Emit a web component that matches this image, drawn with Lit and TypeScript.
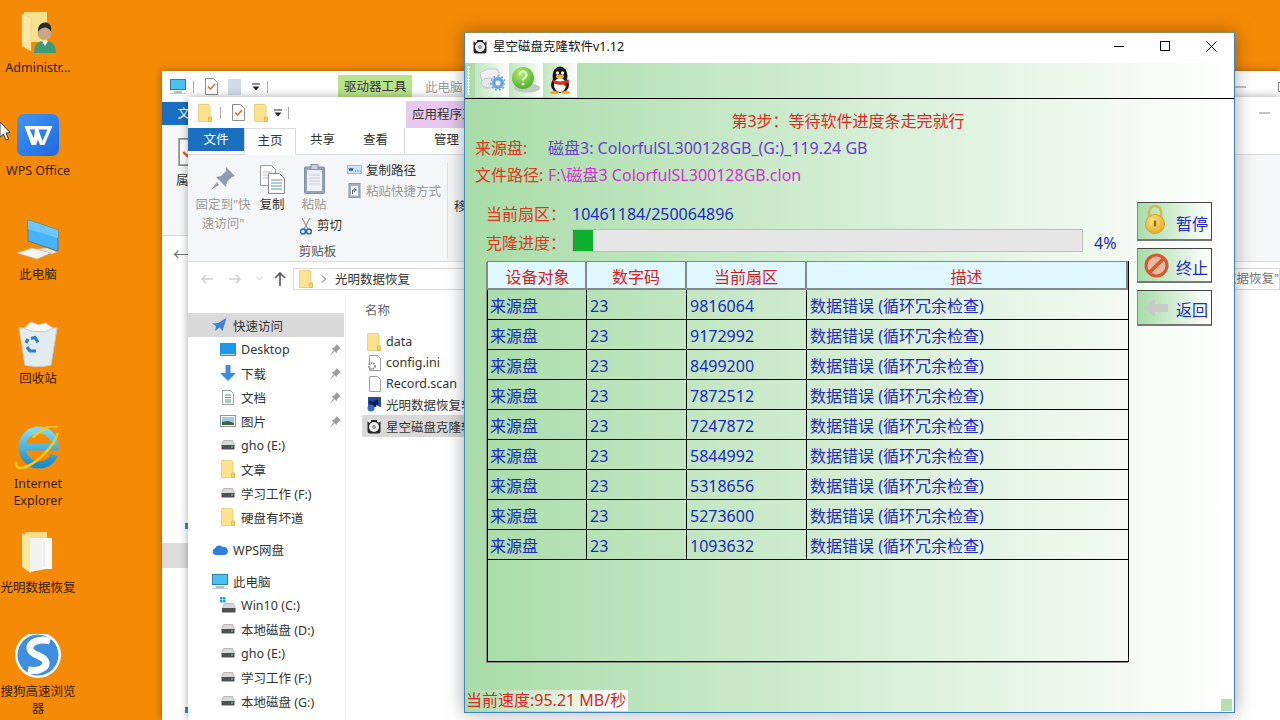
import { LitElement, html, css } from 'lit';
import { customElement } from 'lit/decorators.js';

// ---- small explorer icons ----
const folder = () => html`<svg width="14" height="18" viewBox="0 0 14 18"><path d="M.5.5h10.500l1 1v16H.5z" fill="#fde38f" stroke="#ead07a"/><path d="M10.500 13h3v4.500h-3z" fill="#f5cf68" stroke="#e0bb55"/></svg>`;
const checkDoc = () => html`<svg width="13" height="17" viewBox="0 0 13 17"><path d="M.5.5h8l4 4v12H.5z" fill="#fff" stroke="#8c8c8c"/><path d="M3 8.500l2.500 2.500 4.500-5" fill="none" stroke="#d8602c" stroke-width="1.400"/></svg>`;
const dropdown = () => html`<svg width="8" height="8" viewBox="0 0 8 8"><path d="M0 1h8" stroke="#222"/><path d="M.5 3.500h7L4 7.500z" fill="#222"/></svg>`;
const drive = () => html`<svg width="14" height="10" viewBox="0 0 14 10"><path d="M2.500.5h9l2 5H.5z" fill="#d8d8d8" stroke="#bbb"/><rect x=".5" y="5" width="13" height="4.500" fill="#4c5054"/><rect x="10" y="6.500" width="2" height="1" fill="#8fe08f"/></svg>`;
const winDrive = () => html`<svg width="16" height="16" viewBox="0 0 16 16"><g fill="#19a8c8"><rect x="0" y="0" width="2.500" height="2.500"/><rect x="3" y="0" width="2.500" height="2.500"/><rect x="0" y="3" width="2.500" height="2.500"/><rect x="3" y="3" width="2.500" height="2.500"/></g><path d="M4.500 6.500h9l2 5H2.500z" fill="#d8d8d8" stroke="#bbb"/><rect x="2" y="11" width="13.500" height="4.500" fill="#4c5054"/></svg>`;
const pinSmall = () => html`<svg width="11" height="11" viewBox="0 0 10 10"><path d="M6 0l4 4-1.500.5L6.500 6.500 6 8.500 1.500 4 3.500 3.500 5.500 1.500zM3 6l-3 4 4-3z" fill="#9a9fa6"/></svg>`;
const star = () => html`<svg width="15" height="14" viewBox="0 0 15 14"><path d="M14.500 0L10.500 13 7.500 9.500 3 13 4 8 0 5.500 6 5z" fill="#3b84d8"/></svg>`;
const desktopSmall = () => html`<svg width="16" height="13" viewBox="0 0 16 13"><rect width="16" height="13" fill="#1e96ee"/><rect x="1" y="11" width="14" height="1" fill="#bde0fa"/></svg>`;
const down = () => html`<svg width="16" height="16" viewBox="0 0 16 16"><path d="M5.500 0h5v8H16l-8 8-8-8h5.500z" fill="#3c8ee0"/></svg>`;
const docs = () => html`<svg width="12" height="15" viewBox="0 0 12 15"><path d="M.5.5h8l3 3v11H.5z" fill="#fff" stroke="#9aa0a6"/><path d="M3 5h6M3 7.500h6M3 10h6M3 12h6" stroke="#4aa070"/></svg>`;
const pics = () => html`<svg width="16" height="12" viewBox="0 0 16 12"><rect x=".5" y=".5" width="15" height="11" fill="#fff" stroke="#8d96a0"/><rect x="2" y="2" width="12" height="8" fill="#a8c8e8"/><path d="M2 7l6-1 6 2v2H2z" fill="#3c6040"/></svg>`;
const cloud = () => html`<svg width="16" height="11" viewBox="0 0 16 11"><path d="M4 11a3.500 3.500 0 0 1-1-6.800A5 5 0 0 1 11 3a4 4 0 0 1 1.500 8z" fill="#2f7fdb"/></svg>`;
const pcSmall = () => html`<svg width="16" height="15" viewBox="0 0 16 15"><rect x=".5" y=".5" width="15" height="10" fill="#4cc0f0" stroke="#2a7fb8"/><path d="M4 13h8" stroke="#8ab" stroke-width="1.500"/><path d="M0 14.500h16" stroke="#bcd"/></svg>`;
const gearDoc = () => html`<svg width="14" height="16" viewBox="0 0 14 16"><path d="M2.500.5h8l3 3v12h-11z" fill="#fff" stroke="#a0a0a0"/><circle cx="5" cy="11" r="3" fill="#fff" stroke="#8d8d8d" stroke-width="2" stroke-dasharray="1.500 1"/></svg>`;
const blankDoc = () => html`<svg width="14" height="16" viewBox="0 0 14 16"><path d="M2.500.5h8l3 3v12h-11z" fill="#fff" stroke="#a0a0a0"/></svg>`;
const appBlue = () => html`<svg width="14" height="15" viewBox="0 0 14 15"><rect x="1" y="0" width="13" height="10" fill="#2b4a9c"/><path d="M2 3l4 2 5-3v6l-5 3-3-1z" fill="#101a50"/><circle cx="4" cy="11" r="3.500" fill="#3868c8"/><path d="M9 8l4 2-3 2z" fill="#fff"/></svg>`;
const diskClock = () => html`<svg width="14" height="15" viewBox="0 0 14 15"><rect x=".5" y="1" width="13" height="13.500" rx="2.500" fill="#262626"/><circle cx="7" cy="8" r="5" fill="#f0f0f0"/><circle cx="7" cy="8" r="1.500" fill="#bbb" stroke="#555" stroke-width=".6"/><circle cx="2.500" cy="2" r="1.500" fill="#fff"/><circle cx="11.500" cy="2" r="1.500" fill="#fff"/></svg>`;

// ---- ribbon icons ----
const bigPin = () => html`<svg width="24" height="24" viewBox="0 0 24 24"><path d="M15 0l9 9-3 1-5 5-1 5-10-10 5-1 5-5zM6 15l-6 8 8-5z" fill="#8f9cb4"/></svg>`;
const copyIcon = () => html`<svg width="25" height="29" viewBox="0 0 25 29"><path d="M.5.5h11l4 4v16H.5z" fill="#fff" stroke="#9a9a9a"/><path d="M3 7h9M3 10h9M3 13h9" stroke="#b8b8b8"/><path d="M8.500 8.500h11l5 5v15h-16z" fill="#fff" stroke="#8a8a8a"/><path d="M11 15h11M11 18h11M11 21h11M11 24h11" stroke="#5f96c8"/></svg>`;
const pasteIcon = () => html`<svg width="21" height="30" viewBox="0 0 21 30"><rect x=".5" y="3" width="20" height="26.500" rx="1" fill="#95a3b8" stroke="#808da2"/><rect x="3" y="6" width="15" height="21" fill="#eef1f6"/><path d="M5 11h11M5 14h11M5 17h11M5 20h11" stroke="#c2cbd8"/><rect x="7" y=".5" width="7" height="5" fill="#c8cfda" stroke="#8a96a8"/></svg>`;
const pathIcon = () => html`<svg width="15" height="9" viewBox="0 0 15 9"><rect x=".5" y=".5" width="14" height="8" fill="#cfe2f7" stroke="#9cbde0"/><path d="M2 3l1 3 1-3 1 3 1-3M8 6h1M10.500 6h1M13 6h.500" fill="none" stroke="#2a5a92"/></svg>`;
const shortcutIcon = () => html`<svg width="12" height="16" viewBox="0 0 12 16"><rect x=".5" y="1.500" width="11" height="14" fill="#a6b2c4" stroke="#8a96a8"/><rect x="2.500" y="4" width="7" height="9.500" fill="#f3f5f8"/><path d="M4 12V8h3M5.500 6.500L8 8 5.500 9.500" fill="none" stroke="#5a6a80"/></svg>`;
const scissors = () => html`<svg width="12" height="17" viewBox="0 0 12 17"><path d="M2 0l6 11M10 0L4 11" stroke="#9a9a9a" stroke-width="1.300"/><circle cx="3" cy="13.500" r="2.500" fill="none" stroke="#2068c0" stroke-width="1.500"/><circle cx="9" cy="13.500" r="2.500" fill="none" stroke="#2068c0" stroke-width="1.500"/></svg>`;
const navArrow = (d: string, c: string) => html`<svg width="14" height="12" viewBox="0 0 14 12"><path d=${d} fill="none" stroke=${c} stroke-width="1.500"/></svg>`;

// ---- clone tool icons ----
const toolDisk = () => html`<svg width="26" height="24" viewBox="0 0 26 24"><path d="M1 5l7-4h10l2 3v9H3z" fill="#f2f2f6" stroke="#c5c8d4"/><ellipse cx="10" cy="15" rx="8" ry="5" fill="#e4e6ee" stroke="#c0c4d0"/><circle cx="19" cy="15" r="6" fill="#6da4dc"/><circle cx="19" cy="15" r="2.500" fill="#e8f2fb"/><circle cx="19" cy="15" r="7" fill="none" stroke="#6da4dc" stroke-width="1.500" stroke-dasharray="2 2"/></svg>`;
const toolHelp = () => html`<svg width="30" height="28" viewBox="0 0 30 28"><defs><radialGradient id="hg" cx=".4" cy=".3" r=".8"><stop offset="0" stop-color="#b8ec70"/><stop offset="1" stop-color="#3ea828"/></radialGradient></defs><ellipse cx="16" cy="22" rx="13" ry="4.500" fill="#c2c8c2"/><circle cx="12" cy="12" r="11" fill="url(#hg)"/><path d="M8.500 8.500a3.500 3.500 0 1 1 5 3.500c-1 .7-1.500 1.200-1.500 2.500" fill="none" stroke="#e8f8d8" stroke-width="2"/><circle cx="12" cy="18" r="1.300" fill="#e8f8d8"/></svg>`;
const toolQQ = () => html`<svg width="24" height="28" viewBox="0 0 24 28"><ellipse cx="12" cy="10" rx="7.500" ry="9.500" fill="#141414"/><ellipse cx="12" cy="19" rx="9" ry="8" fill="#141414"/><ellipse cx="12" cy="19" rx="6" ry="7" fill="#fff"/><circle cx="9.500" cy="7" r="1.700" fill="#fff"/><circle cx="14.500" cy="7" r="1.700" fill="#fff"/><ellipse cx="12" cy="10.500" rx="4" ry="2" fill="#f5b818"/><path d="M3.500 13.500c5 2.500 12 2.500 17 0l.5 2.500c-1 1-2 1.500-3 1.800l1 4-4-3.300c-2.500.4-5 .3-8-.5z" fill="#e02818"/><ellipse cx="6.500" cy="26.500" rx="4.500" ry="1.500" fill="#f5a818"/><ellipse cx="17.500" cy="26.500" rx="4.500" ry="1.500" fill="#f5a818"/></svg>`;
const lock = () => html`<svg width="22" height="32" viewBox="0 0 22 32"><defs><radialGradient id="lg" cx=".4" cy=".35" r=".8"><stop offset="0" stop-color="#ffe680"/><stop offset="1" stop-color="#e09a18"/></radialGradient></defs><path d="M5 13V7a6 6 0 0 1 12 0v6" fill="none" stroke="#d8b850" stroke-width="2.500"/><circle cx="11" cy="19" r="9.500" fill="url(#lg)" stroke="#d8a030"/><path d="M11 15.500v6" stroke="#9a6a10" stroke-width="2.500"/></svg>`;
const stopSign = () => html`<svg width="25" height="25" viewBox="0 0 25 25"><circle cx="12.500" cy="12.500" r="10.500" fill="#e8b8a0" stroke="#d45a30" stroke-width="3"/><path d="M5 20L20 5" stroke="#d45a30" stroke-width="3.500"/></svg>`;
const backArrow = () => html`<svg width="24" height="18" viewBox="0 0 24 18"><path d="M0 9l11-9v5h13v8H11v5z" fill="#c6cbc6"/></svg>`;

// ---- desktop icons, drawn on a 76x48 tile ----
const shortcut = (x: number, y: number) => html`<g transform="translate(${x} ${y})"><rect width="12" height="12" fill="#fff" stroke="#ccc" stroke-width=".5"/><path d="M3 10V6h3M5 3.500L8.500 5.800 5 8z" fill="#2a6ab8" stroke="#2a6ab8"/></g>`;
const adminIcon = () => html`<svg width="76" height="48" viewBox="0 0 76 48"><path d="M24 2h23v30H24z" fill="#f7e08e"/><path d="M22 4l9 4v33l-9-5z" fill="#fbe9a8" stroke="#e6c870" stroke-width=".5"/><path d="M34 43c0-9 4-12 11-12s11 3 11 12z" fill="#3f9a78"/><path d="M42 31l3 5 3-5z" fill="#fff"/><circle cx="44.500" cy="23" r="7" fill="#c8a488"/><path d="M38 22c-.5-7 4-10 8-9.500s6 4 5 9c-2-3-4-4-6-4s-5 1-7 4.500z" fill="#2a2a2a"/></svg>`;
const wpsIcon = () => html`<svg width="76" height="48" viewBox="0 0 76 48"><defs><linearGradient id="wg" x1="0" y1="0" x2="1" y2="1"><stop offset="0" stop-color="#4096f4"/><stop offset="1" stop-color="#2068e0"/></linearGradient></defs><rect x="17" y="1" width="42" height="42" rx="7" fill="url(#wg)"/><path d="M24.500 13H52.500L44.500 32H40L38 26.500 36 32H31.500z" fill="#fff"/><path d="M29.500 16.500H35L33.800 25zM38.500 16.500H47.500L42.500 28 40 21z" fill="#2f80ec"/>${shortcut(15, 33)}</svg>`;
const pcIcon = () => html`<svg width="76" height="48" viewBox="0 0 76 48"><path d="M28 3l30 10v21L28 24z" fill="#45b4f8" stroke="#5a7a90"/><path d="M28 3l30 10v8L28 12z" fill="#6cc8fb"/><path d="M36 32l16 5 5-2-10-4z" fill="#e0e0e0"/><path d="M17 36l15-5 19 5-14 6z" fill="#f4f4f4" stroke="#bbb" stroke-width=".5"/></svg>`;
const binIcon = () => html`<svg width="76" height="48" viewBox="0 0 76 48"><path d="M19 7l38 0-6 37c-8 2-18 2-26 0z" fill="#e4ebef" stroke="#c4d0d6"/><path d="M24 7l7-6 8 3 6-2 8 5-8 4-14-1z" fill="#f8f8f8" stroke="#ccc"/><path d="M31 17.500l4-1 3 5M36 30h-6l-3-4M26 22l2-4" fill="none" stroke="#2480d4" stroke-width="3.200"/></svg>`;
const ieIcon = () => html`<svg width="76" height="48" viewBox="0 0 76 48"><defs><linearGradient id="ig" x1="0" y1="0" x2="0" y2="1"><stop offset="0" stop-color="#7ed8f4"/><stop offset="1" stop-color="#1c8cc8"/></linearGradient></defs><path d="M24 21h31c.2-10-7-17-16-17-9.500 0-17 7.500-17 17s7.500 18 17 18c7 0 13-4 15-10" fill="none" stroke="url(#ig)" stroke-width="7"/><path d="M25 20h29" stroke="url(#ig)" stroke-width="6"/><ellipse cx="37" cy="21" rx="28" ry="10" transform="rotate(-45 37 21)" fill="none" stroke="#f5c820" stroke-width="2.500" stroke-dasharray="62 30" stroke-dashoffset="-6"/></svg>`;
const pagesIcon = () => html`<svg width="76" height="48" viewBox="0 0 76 48"><path d="M25 2h22v36H25z" fill="#f7de8c"/><path d="M22 3l9 5v35l-9-6z" fill="#fbe7a4"/><path d="M30 8h13l3 3v28l-16 3z" fill="#f2f2f0"/><path d="M42 8h10v31H42z" fill="#fafafa"/><path d="M44 11v26" stroke="#ddd"/></svg>`;
const sogouIcon = () => html`<svg width="76" height="48" viewBox="0 0 76 48"><circle cx="38" cy="21" r="23" fill="#fff"/><circle cx="38" cy="21" r="20.500" fill="#3f8ee0"/><path d="M50 7C40 4 29 8 30 15c1 6 15 7 16 13 1 6-8 10-18 8" fill="none" stroke="#fff" stroke-width="7"/>${shortcut(15, 33)}</svg>`;

const desktopItems = [
  { top: 10, label: 'Administr...', icon: adminIcon },
  { top: 113, label: 'WPS Office', icon: wpsIcon },
  { top: 217, label: '此电脑', icon: pcIcon },
  { top: 321, label: '回收站', icon: binIcon },
  { top: 426, label: 'Internet Explorer', icon: ieIcon },
  { top: 530, label: '光明数据恢复', icon: pagesIcon },
  { top: 634, label: '搜狗高速浏览器', icon: sogouIcon },
];

type NavItem = { label: string; icon: () => unknown; pin?: boolean; top?: boolean; sel?: boolean; gap?: boolean };
const navItems: NavItem[] = [
  { label: '快速访问', icon: star, top: true, sel: true },
  { label: 'Desktop', icon: desktopSmall, pin: true },
  { label: '下载', icon: down, pin: true },
  { label: '文档', icon: docs, pin: true },
  { label: '图片', icon: pics, pin: true },
  { label: 'gho (E:)', icon: drive },
  { label: '文章', icon: folder },
  { label: '学习工作 (F:)', icon: drive },
  { label: '硬盘有坏道', icon: folder },
  { label: 'WPS网盘', icon: cloud, top: true, gap: true },
  { label: '此电脑', icon: pcSmall, top: true, gap: true },
  { label: 'Win10 (C:)', icon: winDrive },
  { label: '本地磁盘 (D:)', icon: drive },
  { label: 'gho (E:)', icon: drive },
  { label: '学习工作 (F:)', icon: drive },
  { label: '本地磁盘 (G:)', icon: drive },
];

const files = [
  { label: 'data', icon: folder },
  { label: 'config.ini', icon: gearDoc },
  { label: 'Record.scan', icon: blankDoc },
  { label: '光明数据恢复软件', icon: appBlue },
  { label: '星空磁盘克隆软件', icon: diskClock, sel: true },
];

const sectors = ['9816064', '9172992', '8499200', '7872512', '7247872', '5844992', '5318656', '5273600', '1093632'];

// View Component: the clone tool window
@customElement('clone-window')
export class CloneWindow extends LitElement {
  static styles = css`
    :host {
      position: absolute;
      left: 464px;
      top: 32px;
      width: 771px;
      height: 681px;
      display: flex;
      flex-direction: column;
      box-sizing: border-box;
      border: 1px solid #3f82b8;
      border-top-color: #9a8a5a;
      background: #fff;
      box-shadow: 0 0 18px rgba(0, 0, 0, 0.35);
      font-family: 'Noto Sans', 'Noto Sans CJK SC', sans-serif;
      font-size: 16px;
      color: #1a2bc0;
    }
    .title {
      height: 30px;
      flex: none;
      box-sizing: border-box;
      display: flex;
      align-items: center;
      padding: 0 0 4px 8px;
      font-size: 12.5px;
      color: #111;
    }
    .title .name { flex: 1; margin: -2px 0 0 6px; }
    .ctl {
      width: 46px;
      height: 26px;
      display: flex;
      align-items: center;
      justify-content: center;
    }
    .panel {
      flex: 1;
      display: flex;
      flex-direction: column;
      background: linear-gradient(90deg, #a8dca8 0%, #ffffff 100%);
    }
    .toolbar {
      height: 36px;
      flex: none;
      box-sizing: border-box;
      display: flex;
      border-bottom: 1px solid #000;
      padding-left: 2px;
    }
    .grip {
      width: 3px;
      margin: 3px 4px 3px 0;
      background-image: radial-gradient(circle, #f4f8f0 1px, transparent 1.2px);
      background-size: 3px 3px;
    }
    .tool {
      width: 34px;
      height: 34px;
      display: flex;
      align-items: center;
      justify-content: center;
      background: linear-gradient(90deg, #bfe5bf, #fdfefd);
    }
    .tools { display: flex; margin-left: 1px; }
    .content { flex: 1; display: flex; flex-direction: column; padding-top: 9px; }
    .step { line-height: 27px; text-align: center; color: #e0281e; padding-right: 3px; }
    .info { line-height: 27px; display: flex; padding-left: 10px; }
    .lbl { color: #d93a20; }
    .info .lbl { width: 73px; flex: none; }
    .purple { color: #6a3fd0; }
    .magenta { color: #d030d0; }
    .lower { display: flex; margin-top: 13px; padding-left: 21px; }
    .left { width: 643px; flex: none; }
    .sector { height: 22px; line-height: 24px; display: flex; }
    .sector .lbl, .progress .lbl { width: 86px; flex: none; }
    .progress { display: flex; height: 23px; margin-top: 5px; line-height: 28px; }
    .bar {
      width: 511px;
      box-sizing: border-box;
      background: #e6e6e6;
      border: 1px solid #bdbdbd;
    }
    .fill { height: 100%; background: #0cb02c; }
    .pct { margin-left: 11px; }
    .table {
      margin: 9px 0 0 1px;
      height: 401px;
      box-sizing: border-box;
      width: 642px;
      border: 1px solid #000;
      border-top: none;
      box-shadow: -1px 1px 0 #8a8a8a;
    }
    .row {
      display: grid;
      grid-template-columns: 99px 100px 120px 1fr;
      grid-template-rows: 29px;
      height: 30px;
      box-sizing: border-box;
      border-bottom: 1px solid #000;
      line-height: 33px;
    }
    .row > div { border-right: 1px solid #000; padding-left: 3px; overflow: hidden; white-space: nowrap; }
    .row > div:first-child { padding-left: 2px; }
    .row > div:last-child { border-right: none; }
    .head {
      height: 29px;
      grid-template-rows: 26px;
      background: #dff7ff;
      color: #d6201e;
      text-align: center;
      border-bottom: 2px solid #7f8a8a;
      border-top: 1px solid #7f8a8a;
      line-height: 30px;
      box-shadow: -1px 0 0 #7f8a8a;
    }
    .head > div { border-right: 2px solid #7f8a8a; padding-left: 0; }
    .head > div:last-child { border-right: 2px solid #7f8a8a; }
    .buttons { margin-left: 8px; display: flex; flex-direction: column; gap: 7px; }
    .btn {
      width: 75px;
      box-sizing: border-box;
      display: flex;
      align-items: center;
      justify-content: space-between;
      padding: 0 3px 0 6px;
      background: linear-gradient(90deg, #a8dca8, #ffffff);
      border-top: 1px solid #444;
      border-right: 1px solid #444;
      border-left: 1px solid #888;
      border-bottom: 2px solid #777;
    }
    .btn span { padding-top: 3px; }
    .foot { margin-top: auto; display: flex; justify-content: space-between; align-items: flex-end; padding: 0 2px 1px 0; }
    .speed {
      line-height: 21px;
      padding: 0 2px 0 1px;
      color: #d62a20;
      background: linear-gradient(90deg, #a8dca8, #ffffff 92%);
    }
    .grab { width: 11px; height: 12px; background: #b4e0b0; }
  `;

  render() {
    return html`
      <div class="title">
        ${diskClock()}
        <span class="name">星空磁盘克隆软件v1.12</span>
        <div class="ctl"><svg width="10" height="10"><path d="M0 5.500h10" stroke="#000"/></svg></div>
        <div class="ctl"><svg width="10" height="10"><rect x=".5" y=".5" width="9" height="9" fill="none" stroke="#000"/></svg></div>
        <div class="ctl"><svg width="11" height="11"><path d="M.5.5l10 10M10.500.5l-10 10" stroke="#000"/></svg></div>
      </div>
      <div class="panel">
        <div class="toolbar">
          <div class="grip"></div>
          <div class="tools">
            <div class="tool">${toolDisk()}</div>
            <div class="tool">${toolHelp()}</div>
            <div class="tool">${toolQQ()}</div>
          </div>
        </div>
        <div class="content">
          <div class="step">第3步：等待软件进度条走完就行</div>
          <div class="info"><span class="lbl">来源盘:</span><span class="purple">磁盘3: ColorfulSL300128GB_(G:)_119.24 GB</span></div>
          <div class="info"><span class="lbl">文件路径:</span><span class="magenta">F:\\磁盘3 ColorfulSL300128GB.clon</span></div>
          <div class="lower">
            <div class="left">
              <div class="sector"><span class="lbl">当前扇区：</span><span>10461184/250064896</span></div>
              <div class="progress">
                <span class="lbl">克隆进度：</span>
                <div class="bar"><div class="fill" style="width: 4%"></div></div>
                <span class="pct">4%</span>
              </div>
              <div class="table">
                <div class="row head"><div>设备对象</div><div>数字码</div><div>当前扇区</div><div>描述</div></div>
                ${sectors.map(
                  (s) => html`<div class="row"><div>来源盘</div><div>23</div><div>${s}</div><div>数据错误 (循环冗余检查)</div></div>`
                )}
              </div>
            </div>
            <div class="buttons">
              <div class="btn" style="height: 39px">${lock()}<span>暂停</span></div>
              <div class="btn" style="height: 35px">${stopSign()}<span>终止</span></div>
              <div class="btn" style="height: 36px">${backArrow()}<span>返回</span></div>
            </div>
          </div>
          <div class="foot">
            <span class="speed">当前速度:95.21 MB/秒</span>
            <div class="grab"></div>
          </div>
        </div>
      </div>
    `;
  }
}

// View Component: desktop with the two explorer windows behind the tool
@customElement('app-root')
export class AppRoot extends LitElement {
  static styles = css`
    :host {
      display: block;
      position: relative;
      width: 1280px;
      height: 720px;
      overflow: hidden;
      background: #f58a06;
      font-family: 'Noto Sans', 'Noto Sans CJK SC', sans-serif;
      font-size: 12.5px;
      color: #333;
    }
    .dicon {
      position: absolute;
      left: 0;
      width: 76px;
      text-align: center;
      color: #3a1c00;
      line-height: 17px;
    }
    .dicon svg { display: block; margin-bottom: 1px; }
    .cursor { position: absolute; left: 0; top: 120px; }

    .win {
      position: absolute;
      background: #fff;
      display: flex;
      flex-direction: column;
      overflow: hidden;
      box-shadow: 0 0 8px rgba(0, 0, 0, 0.35);
    }
    .back { left: 162px; top: 71px; width: 1118px; height: 649px; }
    .front { left: 188px; top: 97px; width: 1092px; height: 623px; }

    .qbar { display: flex; align-items: center; flex: none; height: 31px; white-space: nowrap; }
    .qbar svg { flex: none; }
    .back .qbar { padding-left: 8px; }
    .front .qbar { padding-left: 10px; }
    .sep { width: 1px; height: 12px; background: #a8a8a8; flex: none; }
    .dtab {
      height: 22px;
      flex: none;
      align-self: flex-end;
      background: #b9e38c;
      line-height: 23px;
      padding: 0 6px;
      box-sizing: border-box;
      width: 74px;
      margin-bottom: 5px;
    }
    .ctxtab { background: #e6c8f0; margin: 0 0 0 117px; height: 27px; line-height: 27px; width: 90px; }
    .gray { color: #9a9a9a; }
    .qmin { margin-left: auto; }
    .back .qmin { margin-right: 32px; }
    .front .qmin { margin-right: 10px; }
    .qmax { margin-right: -8px; }

    .tabs { height: 26px; display: flex; flex: none; border-bottom: 1px solid #dadbdc; }
    .back .tabs { height: 23px; border-bottom: none; }
    .tab { line-height: 24px; text-align: center; width: 53px; height: 26px; box-sizing: border-box; }
    .file { width: 56px; height: 23px; background: #1a6fc0; color: #fff; line-height: 23px; }
    .cur { width: 52px; border: 1px solid #dadbdc; border-bottom: 1px solid #fff; height: 27px; background: #fff; }
    .mgr { border-left: 1px solid #dadbdc; margin-left: 2px; width: 84px; }

    .ribbon {
      height: 107px;
      flex: none;
      box-sizing: border-box;
      background: #f5f6f7;
      border-bottom: 1px solid #dadbdc;
      padding: 8px 0 0 8px;
      display: flex;
      white-space: nowrap;
    }
    .back .ribbon { height: 111px; padding: 13px 0 0 15px; display: block; }
    .prop svg { display: block; width: 24px; height: 28px; }
    .prop div { margin-top: 6px; line-height: 17px; margin-left: -1px; }
    .rgroup { width: 252px; flex: none; box-sizing: border-box; border-right: 1px solid #e2e3e4; padding-right: 8px; margin-bottom: 2px; }
    .rtop { height: 80px; display: flex; }
    .big { display: flex; flex: none; flex-direction: column; align-items: center; line-height: 18px; }
    .big .ic { height: 32px; display: flex; align-items: center; }
    .big .t { line-height: 20px; }
    .rname { text-align: center; line-height: 18px; color: #555; }
    .cut { display: flex; align-items: center; gap: 5px; height: 22px; color: #333; margin-left: 6px; align-self: flex-start; }
    .small { margin: -4px 0 0 13px; flex: none; display: flex; flex-direction: column; gap: 1px; }
    .small div { display: flex; align-items: center; height: 20px; gap: 4px; }
    .small svg { width: 15px; }
    .nextgroup { margin: 33px 0 0 6px; }

    .addr { height: 33px; flex: none; display: flex; align-items: center; }
    .arrows { display: flex; width: 105px; padding-left: 12px; box-sizing: border-box; align-items: center; gap: 14px; }
    .up { margin-left: -3px; }
    .crumb {
      width: 780px;
      height: 22px;
      flex: none;
      box-sizing: border-box;
      border: 1px solid #dadada;
      display: flex;
      align-items: center;
      padding-left: 5px;
      gap: 8px;
    }
    .search {
      margin-left: 8px;
      flex: 1;
      height: 22px;
      box-sizing: border-box;
      border: 1px solid #dadada;
      display: flex;
      justify-content: flex-end;
      line-height: 20px;
      color: #777;
      white-space: nowrap;
      overflow: hidden;
    }

    .body { flex: 1; display: flex; }
    .nav { width: 158px; flex: none; padding-top: 18px; border-right: 1px solid #f0f0f0; box-sizing: border-box; }
    .nitem { height: 24px; display: flex; align-items: center; width: 156px; white-space: nowrap; }
    .nitem .ni { width: 21px; display: flex; justify-content: center; margin-left: 29px; margin-right: 3px; flex: none; }
    .nitem.top .ni { margin-left: 21px; }
    .nitem.sel { background: #d9d9d9; }
    .nitem.gap { margin-top: 8px; }
    .nitem .pin { margin-left: auto; margin-right: 3px; display: flex; }
    .list { padding: 6px 0 0 16px; flex: 1; }
    .colh { line-height: 20px; color: #666; padding-left: 3px; height: 24px; margin-bottom: 6px; }
    .fitem { height: 21px; width: 240px; display: flex; align-items: center; gap: 5px; padding-left: 5px; white-space: nowrap; }
    .fitem .fi { width: 14px; display: flex; justify-content: center; flex: none; }
    .fitem.sel { background: #d9d9d9; height: 22px; }

    .strip { display: flex; flex-direction: column; }
    .strip .arrow { height: 36px; line-height: 36px; padding-left: 11px; font-size: 16px; color: #777; }
    .bluedot { width: 3px; height: 6px; background: #3a8ad8; margin-left: 23px; }
    .strip-sel { height: 25px; background: #dcdcdc; width: 26px; margin-top: 14px; }
  `;

  render() {
    return html`
      ${desktopItems.map(
        (d) => html`<div class="dicon" style="top: ${d.top}px">${d.icon()}${d.label}</div>`
      )}
      <svg class="cursor" width="12" height="24" viewBox="0 0 12 24"><path d="M0 2l10 10.500-4 .5 2.500 6-2.500 1-2.500-6-3.500 3z" fill="#fff" stroke="#111" stroke-width=".8"/></svg>

      ${this.renderBackWindow()} ${this.renderFrontWindow()}
      <clone-window></clone-window>
    `;
  }

  renderBackWindow() {
    return html`
      <div class="win back">
        <div class="qbar">
          ${pcSmall()}
          <span class="sep" style="margin: 0 11px 0 7px"></span>
          ${checkDoc()}
          <svg style="margin: 0 11px 0 10px" width="13" height="16"><rect width="13" height="16" fill="#cfdbea"/></svg>
          ${dropdown()}
          <span class="sep" style="margin-left: 7px"></span>
          <div class="dtab" style="margin-left: 70px">驱动器工具</div>
          <span class="gray" style="margin-left: 13px">此电脑</span>
          <svg class="qmin" width="11" height="2"><path d="M0 1h11" stroke="#888"/></svg>
          <svg class="qmax" width="10" height="10"><rect x=".5" y=".5" width="9" height="9" fill="none" stroke="#888"/></svg>
        </div>
        <div class="tabs"><div class="tab file">文件</div></div>
        <div class="ribbon prop">
          ${checkDoc()}
          <div>属性</div>
        </div>
        <div class="strip">
          <div class="arrow">←</div>
          <div class="bluedot" style="margin-top: 251px"></div>
          <div class="strip-sel"></div>
          <div class="bluedot" style="margin-top: 139px"></div>
        </div>
      </div>
    `;
  }

  renderFrontWindow() {
    return html`
      <div class="win front">
        <div class="qbar">
          ${folder()}
          <span class="sep" style="margin: 0 11px 0 8px"></span>
          ${checkDoc()}
          <span style="margin-left: 9px; display: flex">${folder()}</span>
          <span style="margin: 0 6px; display: flex">${dropdown()}</span>
          <span class="sep"></span>
          <div class="dtab ctxtab">应用程序工具</div>
          <svg class="qmin" width="11" height="2"><path d="M0 1h11" stroke="#888"/></svg>
        </div>
        <div class="tabs">
          <div class="tab file">文件</div>
          <div class="tab cur">主页</div>
          <div class="tab">共享</div>
          <div class="tab">查看</div>
          <div class="tab mgr">管理</div>
        </div>
        <div class="ribbon">
          <div class="rgroup">
            <div class="rtop">
              <div class="big gray" style="width: 54px"><div class="ic">${bigPin()}</div><div class="t">固定到"快</div><div>速访问"</div></div>
              <div class="big" style="width: 44px"><div class="ic">${copyIcon()}</div><div class="t">复制</div></div>
              <div class="big" style="width: 40px">
                <div class="ic">${pasteIcon()}</div>
                <div class="t gray">粘贴</div>
                <div class="cut">${scissors()}<span>剪切</span></div>
              </div>
              <div class="small">
                <div>${pathIcon()}<span>复制路径</span></div>
                <div class="gray">${shortcutIcon()}<span>粘贴快捷方式</span></div>
              </div>
            </div>
            <div class="rname">剪贴板</div>
          </div>
          <div class="nextgroup">移</div>
        </div>
        <div class="addr">
          <div class="arrows">
            ${navArrow('M13 6H2M6 2L2 6l4 4', '#cfcfcf')}
            ${navArrow('M1 6h11M8 2l4 4-4 4', '#cfcfcf')}
            <svg width="7" height="5"><path d="M.5.5L3.500 4 6.500.5" fill="none" stroke="#ccc"/></svg>
            <svg class="up" width="12" height="14" viewBox="0 0 12 14"><path d="M6 14V2M1 6l5-5 5 5" fill="none" stroke="#555" stroke-width="1.600"/></svg>
          </div>
          <div class="crumb">
            ${folder()}
            <svg width="6" height="8"><path d="M1 .5L4.500 4 1 7.500" fill="none" stroke="#666"/></svg>
            <span>光明数据恢复</span>
          </div>
          <div class="search"><span>数据恢复"</span></div>
        </div>
        <div class="body">
          <div class="nav">
            ${navItems.map(
              (n) => html`<div class="nitem ${n.top ? 'top' : ''} ${n.sel ? 'sel' : ''} ${n.gap ? 'gap' : ''}">
                <span class="ni">${n.icon()}</span><span>${n.label}</span>
                ${n.pin ? html`<span class="pin">${pinSmall()}</span>` : ''}
              </div>`
            )}
          </div>
          <div class="list">
            <div class="colh">名称</div>
            ${files.map(
              (f) => html`<div class="fitem ${f.sel ? 'sel' : ''}"><span class="fi">${f.icon()}</span><span>${f.label}</span></div>`
            )}
          </div>
        </div>
      </div>
    `;
  }
}
